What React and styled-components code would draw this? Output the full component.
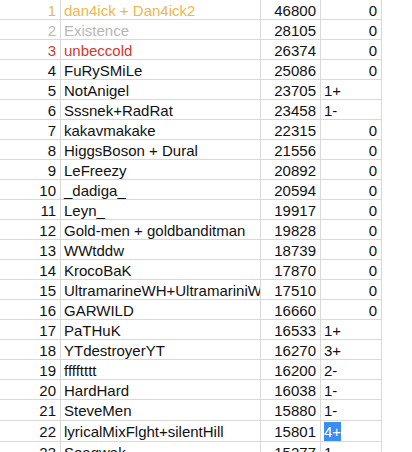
import React from 'react';
import styled, { createGlobalStyle } from 'styled-components';

const GlobalStyle = createGlobalStyle`
  html, body {
    margin: 0;
    padding: 0;
    background: #ffffff;
    overflow: hidden;
  }
`;

const Sheet = styled.div`
  width: 412px;
  height: 452px;
  overflow: hidden;
  font-family: 'Liberation Sans', Arial, sans-serif;
  font-size: 15px;
  color: #111;
`;

const Row = styled.div`
  display: grid;
  grid-template-columns: 61px 200px 60px 61px;
  width: 382px;
  height: ${(p) => p.$h || 20}px;
`;

const Cell = styled.div`
  box-sizing: border-box;
  border-right: 1px solid #d9d9d9;
  border-bottom: 1px solid #d9d9d9;
  padding: 0 ${(p) => (p.$right ? 4 : 0)}px 0 ${(p) => (p.$left ? 3 : 0)}px;
  text-align: ${(p) => (p.$right ? 'right' : 'left')};
  white-space: nowrap;
  overflow: hidden;
  line-height: 22px;
  color: ${(p) => p.$color || 'inherit'};
`;

const Selected = styled.span`
  background: #3a8ef2;
  color: #fff;
  padding: 1px 0 2px;
`;

const rows = [
  ['dan4ick + Dan4ick2', 46800, '0', '#f1b748'],
  ['Existence', 28105, '0', '#b7b7b7'],
  ['unbeccold', 26374, '0', '#d2392b'],
  ['FuRySMiLe', 25086, '0'],
  ['NotAnigel', 23705, '1+'],
  ['Sssnek+RadRat', 23458, '1-'],
  ['kakavmakake', 22315, '0'],
  ['HiggsBoson + Dural', 21556, '0'],
  ['LeFreezy', 20892, '0'],
  ['_dadiga_', 20594, '0'],
  ['Leyn_', 19917, '0'],
  ['Gold-men + goldbanditman', 19828, '0'],
  ['WWtddw', 18739, '0'],
  ['KrocoBaK', 17870, '0'],
  ['UltramarineWH+UltramariniWH', 17510, '0'],
  ['GARWILD', 16660, '0'],
  ['PaTHuK', 16533, '1+'],
  ['YTdestroyerYT', 16270, '3+'],
  ['fffftttt', 16200, '2-'],
  ['HardHard', 16038, '1-'],
  ['SteveMen', 15880, '1-'],
  ['lyricalMixFlght+silentHill', 15801, '4+'],
  ['Seagwak', 15277, '1-'],
];

export default function App() {
  return (
    <Sheet>
      <GlobalStyle />
      {rows.map(([name, score, change, color], i) => {
        const n = i + 1;
        const isZero = change === '0';
        return (
          <Row key={n} $h={n === 21 || n === 22 ? 21 : 20}>
            <Cell $right $color={color}>{n}</Cell>
            <Cell $left $color={color}>{name}</Cell>
            <Cell $right>{score}</Cell>
            <Cell $right={isZero} $left={!isZero}>
              {n === 22 ? <Selected>{change}</Selected> : change}
            </Cell>
          </Row>
        );
      })}
    </Sheet>
  );
}
